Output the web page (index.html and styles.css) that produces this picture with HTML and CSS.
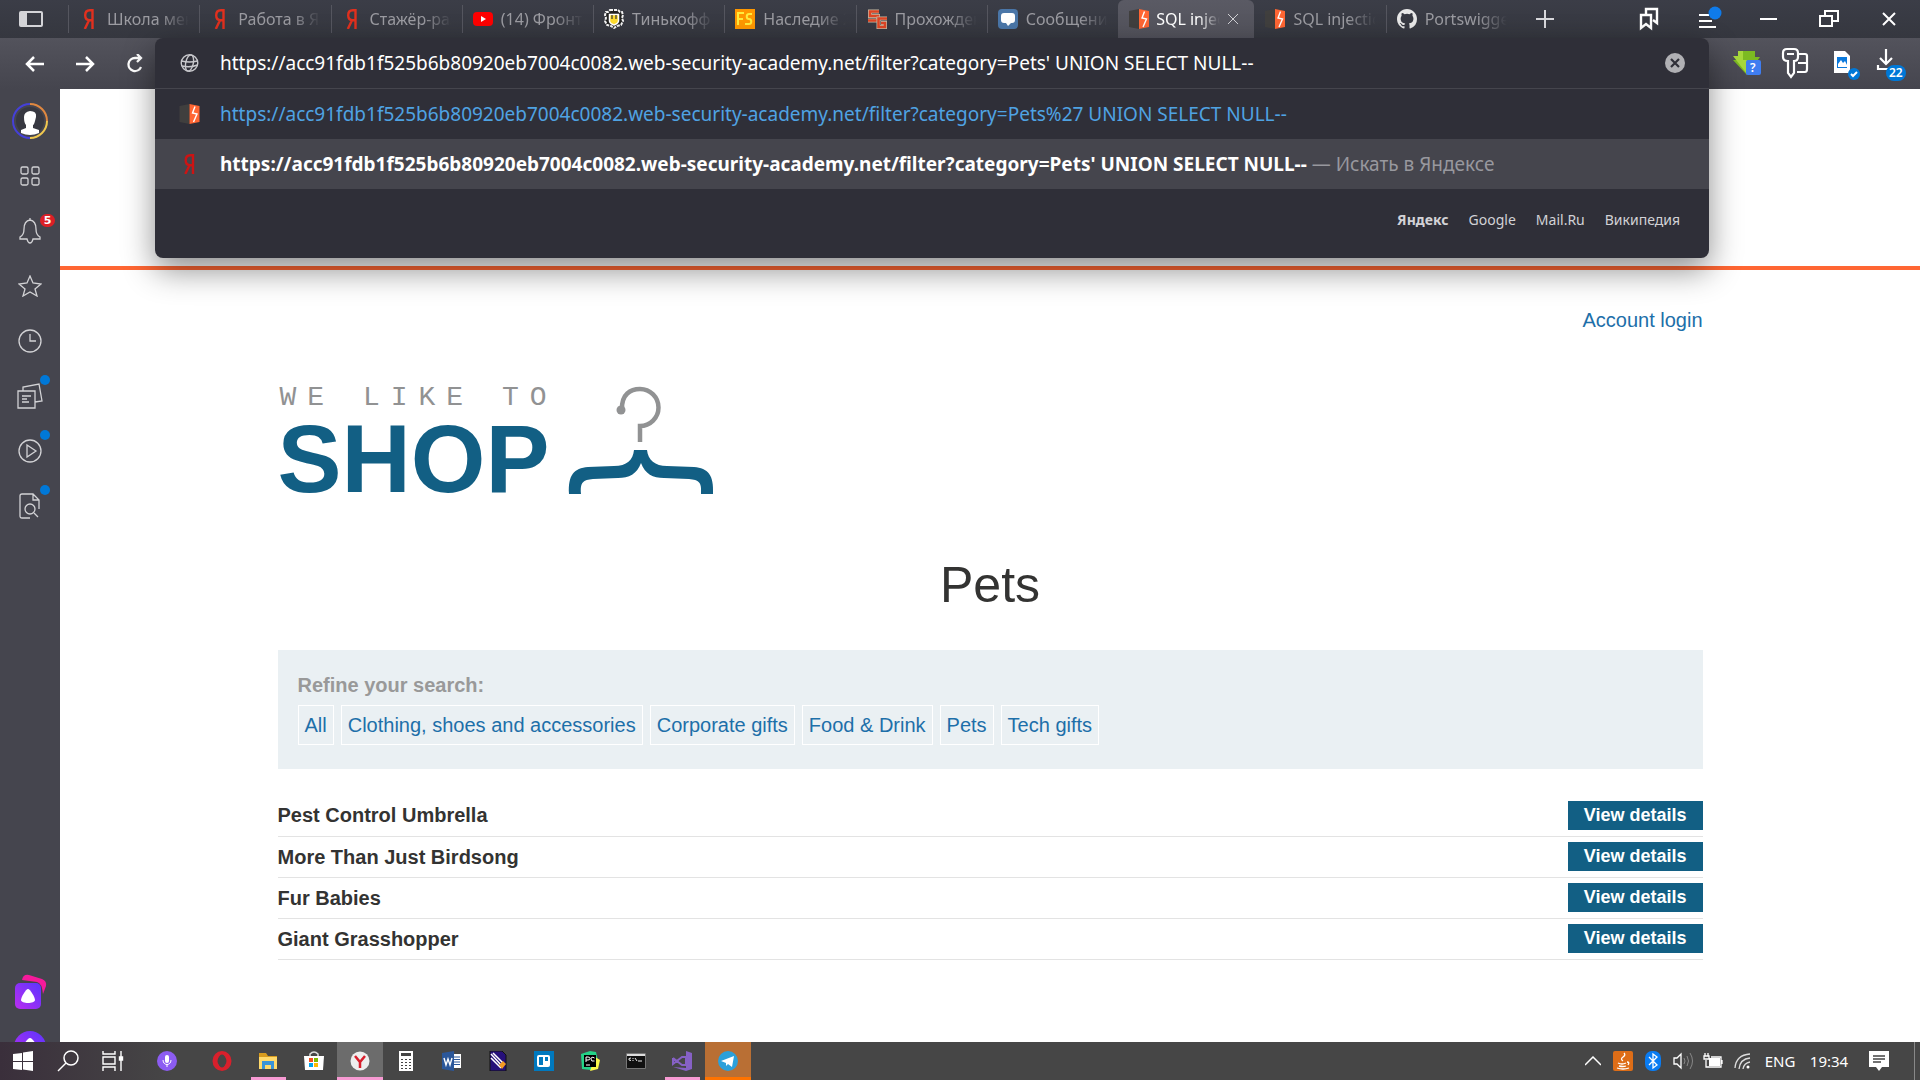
FILE: index.html
```html
<!DOCTYPE html>
<html lang="ru">
<head>
<meta charset="utf-8">
<title>SQL injection</title>
<link rel="stylesheet" href="styles.css">
</head>
<body>
<svg class="defs" aria-hidden="true">
  <symbol id="burp" viewBox="0 0 20 20"><path fill="#403f3e" d="M0 2 10 0v20L0 18z"/><path fill="#ff6633" d="M10 0l10 2v16l-10 2z"/><path d="M15.500 2.500 13 9l4.500 1-3.500 8" fill="none" stroke="#fff" stroke-width="1.400"/></symbol>
  <symbol id="ya" viewBox="0 0 20 20"><path d="M13.500 20V1.200h-2.700C7.800 1.200 6.200 3 6.200 6.200c0 3 1.600 5 4.600 5h2.700M10 11.200 5.800 20" fill="none" stroke="currentColor" stroke-width="2.400"/></symbol>
</svg>

<header class="tabbar">
  <button class="panel-toggle" aria-label="Tab panel"><svg width="24" height="16"><rect x="1" y="1" width="22" height="14" rx="1" fill="none" stroke="#d4d4d8" stroke-width="2"/><path fill="#d4d4d8" d="M1 1h7v14H1z"/></svg></button>
  <nav class="tabs">
    <a class="tab" href="#"><svg class="fav red"><use href="#ya"/></svg><span>Школа мен</span></a>
    <a class="tab" href="#"><svg class="fav red"><use href="#ya"/></svg><span>Работа в Ян</span></a>
    <a class="tab" href="#"><svg class="fav red"><use href="#ya"/></svg><span>Стажёр-раз</span></a>
    <a class="tab" href="#"><svg class="fav" viewBox="0 0 20 20"><rect y="3" width="20" height="14" rx="4" fill="#f00"/><path fill="#fff" d="M8 7l5 3-5 3z"/></svg><span>(14) Фронт</span></a>
    <a class="tab" href="#"><svg class="fav" viewBox="0 0 20 20"><path fill="#222" stroke="#f2f2f2" stroke-width="2" stroke-dasharray="3 1" d="M6 1h8l2 2h2l1 3-1 3 1 3-2 4-4 1-3 2-3-2-4-1-2-4 1-3-1-3 1-3h2z"/><path fill="#ffdd2d" stroke="#fff" stroke-width="1.500" d="M5.500 5.500h9V12c0 2-2 3-4.500 4-2.500-1-4.500-2-4.500-4z"/><path stroke="#333" stroke-width="1.200" d="M8 6v4M12 6v4"/></svg><span>Тинькофф</span></a>
    <a class="tab" href="#"><svg class="fav" viewBox="0 0 20 20"><path fill="#ff9800" d="M0 0h20v20H0z"/><path fill="none" stroke="#ffec3d" stroke-width="2" d="M3 16V4h6M3 10h5M17 5h-3c-3 0-3 5 0 5s3 5 0 5h-4"/></svg><span>Наследие 2</span></a>
    <a class="tab" href="#"><svg class="fav" viewBox="0 0 20 20"><path fill="none" stroke="#c5b9a4" stroke-width="4" d="M12 2.500H3V7h8v4.500H1"/><path fill="none" stroke="#dd4525" stroke-width="2.500" d="M12 2.500H3V7h8v4.500H1"/><path fill="none" stroke="#c5b9a4" stroke-width="4" d="M20 9.500h-8.500V18H18v-4h-4"/><path fill="none" stroke="#dd4525" stroke-width="2.500" d="M20 9.500h-8.500V18H18v-4h-4"/></svg><span>Прохожден</span></a>
    <a class="tab" href="#"><svg class="fav" viewBox="0 0 20 20"><rect width="20" height="20" rx="4" fill="#4a76a8"/><path fill="#fff" d="M6 4h8q3 0 3 3v4q0 3-3 3h-1l-3 3-2-3H6q-3 0-3-3V7q0-3 3-3"/></svg><span>Сообщени</span></a>
    <a class="tab active" href="#"><svg class="fav"><use href="#burp"/></svg><span>SQL injec</span><svg class="tab-close" width="12" height="12"><path d="M1 1l10 10M11 1 1 11" stroke="#d0d0d4"/></svg></a>
    <a class="tab" href="#"><svg class="fav"><use href="#burp"/></svg><span>SQL injectic</span></a>
    <a class="tab" href="#"><svg class="fav" viewBox="0 0 16 16"><path fill="#e8e8e8" d="M8 0C3.580 0 0 3.580 0 8c0 3.540 2.290 6.530 5.470 7.590.4.070.55-.17.55-.38v-1.490c-2.010.37-2.530-.49-2.690-.94-.09-.23-.48-.94-.82-1.130-.28-.15-.68-.52-.01-.53.63-.01 1.080.58 1.230.82.72 1.210 1.870.87 2.330.66.07-.52.28-.87.51-1.070-1.780-.2-3.640-.89-3.640-3.950 0-.87.31-1.590.82-2.150-.08-.2-.36-1.020.08-2.120 0 0 .67-.21 2.200.82a7.400 7.400 0 0 1 4 0c1.530-1.040 2.200-.82 2.200-.82.44 1.100.16 1.920.08 2.120.51.56.82 1.270.82 2.150 0 3.070-1.870 3.750-3.650 3.950.29.25.54.73.54 1.480v2.200c0 .21.15.46.55.38A8 8 0 0 0 16 8c0-4.420-3.580-8-8-8"/></svg><span>Portswigge</span></a>
  </nav>
  <button class="new-tab" aria-label="New tab"><svg width="18" height="18"><path d="M9 0v18M0 9h18" stroke="#d8d8dc" stroke-width="2"/></svg></button>
  <div class="window-buttons">
    <button aria-label="Bookmarks"><svg width="20" height="24"><path fill="none" stroke="#fff" stroke-width="2.400" d="M2 8h10v13l-5-4-5 4z"/><path d="M7 7V2h11v14l-4-3" fill="none" stroke="#fff" stroke-width="2.400"/></svg></button>
    <button aria-label="Menu"><svg width="26" height="26"><path d="M3 9h10M3 15h13M3 21h17" stroke="#fff" stroke-width="2"/><circle cx="19" cy="7" r="6.500" fill="#0f7bea"/></svg></button>
    <button aria-label="Minimize"><svg width="18" height="18"><path d="M0 9h17" stroke="#fff" stroke-width="2"/></svg></button>
    <button aria-label="Restore"><svg width="20" height="18"><path d="M1 6h12v10H1zM6 6V1h13v10h-6" fill="none" stroke="#fff" stroke-width="2"/></svg></button>
    <button aria-label="Close"><svg width="14" height="14"><path d="M1 1l12 12M13 1 1 13" stroke="#fff" stroke-width="2"/></svg></button>
  </div>
</header>

<div class="toolbar">
  <div class="nav-buttons">
    <button aria-label="Back"><svg width="20" height="18"><path d="M19 9H2M9 2 2 9l7 7" fill="none" stroke="#fff" stroke-width="2.500"/></svg></button>
    <button aria-label="Forward"><svg width="20" height="18"><path d="M1 9h17M11 2l7 7-7 7" fill="none" stroke="#fff" stroke-width="2.500"/></svg></button>
    <button aria-label="Reload"><svg width="18" height="20"><path d="M15 13a6.500 6.500 0 1 1-6-9h6M11 0l4 4-4 4" fill="none" stroke="#fff" stroke-width="2.300"/></svg></button>
  </div>
  <div class="omnibox">
    <div class="popup">
      <div class="address">
        <svg class="row-icon" viewBox="0 0 20 20"><g fill="none" stroke="#c8c8cc" stroke-width="1.400"><circle cx="10" cy="10" r="8.300"/><ellipse cx="10" cy="10" rx="3.800" ry="8.300" transform="rotate(12 10 10)"/><path d="M2 8q8 2 16 0M2.500 13q8 2 15.500-1"/></g></svg>
        <input type="text" aria-label="Address" value="https://acc91fdb1f525b6b80920eb7004c0082.web-security-academy.net/filter?category=Pets' UNION SELECT NULL--">
        <button aria-label="Clear"><svg width="20" height="20"><circle cx="10" cy="10" r="10" fill="#b0b0b4"/><path d="M6 6l8 8M14 6l-8 8" stroke="#2f2f38" stroke-width="2.200"/></svg></button>
      </div>
      <a class="suggest blue" href="#"><svg class="row-icon"><use href="#burp"/></svg><span>https://acc91fdb1f525b6b80920eb7004c0082.web-security-academy.net/filter?category=Pets%27 UNION SELECT NULL--</span></a>
      <a class="suggest selected" href="#"><svg class="row-icon dark-red"><use href="#ya"/></svg><span><b>https://acc91fdb1f525b6b80920eb7004c0082.web-security-academy.net/filter?category=Pets' UNION SELECT NULL--</b><small> — Искать в Яндексе</small></span></a>
      <div class="engines"><a href="#"><b>Яндекс</b></a><a href="#">Google</a><a href="#">Mail.Ru</a><a href="#">Википедия</a></div>
    </div>
  </div>
  <div class="extensions">
    <button aria-label="Savefrom"><svg width="30" height="28"><path fill="#7cba22" d="M7 1h16v6h5L15 25 1 10h6z"/><path fill="#a6d83c" d="M1 6h5V1h5v9h4v14z"/><rect x="14" y="10" width="15" height="15" rx="2" fill="#3f7df0"/><text x="18" y="22" class="badge-text">?</text></svg></button>
    <button aria-label="Passwords"><svg width="28" height="34"><path d="M6 2h7q4 0 4 4v4q0 4-4 4v12l-3 4-3-4V14q-5 0-5-4V6q0-4 4-4zM6 7h7M18 7h6q2 0 2 2v13q0 3-2 3h-8M17 16h9" fill="none" stroke="#fff" stroke-width="2.200"/></svg></button>
    <button class="shot" aria-label="Screenshot"><svg width="30" height="32"><path fill="#fff" d="M2 3h11l5 5v17H2z"/><path fill="#0b79dc" d="M5 9h10v11H5z"/><path fill="#fff" d="m6 16 3-4 2 3 2-2 2 4v2H6z"/><circle cx="22" cy="26" r="6" fill="#0078d7"/><path d="m19 26 2 2 4-4" fill="none" stroke="#fff" stroke-width="2"/></svg></button>
    <button aria-label="Downloads"><svg width="32" height="36"><path d="M11 3v15M5 12l6 6 6-6M3 19v4h11" fill="none" stroke="#fff" stroke-width="2.200"/><rect x="11" y="19" width="20" height="16" rx="8" fill="#0078d7"/><text x="14" y="31" class="badge-text">22</text></svg></button>
  </div>
</div>

<div class="main">
  <aside class="sidebar">
    <button aria-label="Profile"><svg width="36" height="36" fill="none" stroke-width="2"><circle cx="18" cy="18" r="14" fill="#373841"/><path stroke="#4540d8" d="M18 35a17 17 0 0 1 0-34"/><path stroke="#e08840" d="M18 1a17 17 0 0 1 17 17"/><path stroke="#f0c850" d="M35 18a17 17 0 0 1-17 17"/><path fill="#fff" d="M12 14q0-5 6-6 7 0 6 6l-1 4q-1 4-2 4v3l6 2v3q-9 4-18 0v-3l5-2v-3q-2-2-2-8"/></svg></button>
    <button aria-label="Apps"><svg width="22" height="22" class="line"><rect x="2" y="2" width="7" height="7" rx="1.500"/><rect x="13" y="2" width="7" height="7" rx="1.500"/><rect x="2" y="13" width="7" height="7" rx="1.500"/><rect x="13" y="13" width="7" height="7" rx="1.500"/></svg></button>
    <button aria-label="Notifications"><svg width="24" height="28" class="line"><path d="M12 1v2q6 1 6 9 0 6 4 8v2h-7q-1 4-3 4t-3-4H2v-2q4-2 4-8 0-8 6-9"/></svg><i class="count">5</i></button>
    <button aria-label="Favourites"><svg width="24" height="22" class="line"><path d="m12 1 3 7 8 1-6 5 2 7-7-4-7 4 2-7-6-5 8-1z"/></svg></button>
    <button aria-label="History"><svg width="24" height="24" class="line"><circle cx="12" cy="12" r="11"/><path d="M12 5v7h6"/></svg></button>
    <button aria-label="Collections"><svg width="26" height="26" class="line"><path d="M1 8h17v17H1zM5 13h9M5 16h5M5 19h7M6 8V4l16-3 3 17-7 1"/></svg><i class="dot"></i></button>
    <button aria-label="Video"><svg width="24" height="24" class="line"><circle cx="12" cy="12" r="11"/><path d="m9 6 9 6-9 6z"/></svg><i class="dot"></i></button>
    <button aria-label="Find"><svg width="22" height="26" class="line"><path d="M11 25H3q-2 0-2-2V3q0-2 2-2h11l6 6v9M14 1v6h6M15 20l4 4"/><circle cx="11" cy="16" r="5"/></svg><i class="dot"></i></button>
    <div class="alice">
      <button aria-label="Alice"><svg width="34" height="36"><defs><linearGradient id="al" x1="1" y1="0" x2="0" y2="1"><stop stop-color="#5a35ff"/><stop offset="1" stop-color="#bb2df0"/></linearGradient></defs><path fill="#f51a9b" d="M9 6q1-6 7-5l13 4q5 2 4 7l-3 8q-1-11-6-12z"/><rect x="2" y="9" width="26" height="26" rx="5" fill="url(#al)"/><path fill="#fff" d="M15 15c2 0 7 8 7 11 0 4-14 4-14 0 0-3 5-11 7-11"/></svg></button>
      <button aria-label="Assistant"><svg width="34" height="34"><circle cx="17" cy="17" r="16" fill="url(#al)"/><path fill="#fff" d="M17 8c3 0 8 9 8 12 0 5-16 5-16 0 0-3 5-12 8-12"/></svg></button>
    </div>
  </aside>

  <main class="page">
    <div class="banner"></div>
    <div class="container">
      <div class="account"><a href="#">Account login</a></div>
      <div class="logo">
        <div class="logo-words"><span class="logo-small">WE LIKE TO</span><span class="logo-big">SHOP</span></div>
        <svg width="146" height="110" viewBox="0 0 146 110"><path d="M54 24C53 8 63 3 72 3a18 18 0 0 1 0 37v16" fill="none" stroke="#919293" stroke-width="4.500"/><circle cx="53" cy="24" r="4.500" fill="#919293"/><path fill="#125f84" d="M66 64h13c1 10 8 16 20 16l27 1c14 1 20 8 19 27h-12c1-12-2-14-12-15l-25-1c-11 0-19-4-23-15-4 11-12 15-23 15l-25 1c-10 1-13 3-12 15H1C0 89 6 82 20 81l26-1c13 0 19-6 20-16"/></svg>
      </div>
      <h1>Pets</h1>
      <section class="filters">
        <h2>Refine your search:</h2>
        <div class="tags"><a href="#">All</a><a href="#">Clothing, shoes and accessories</a><a href="#">Corporate gifts</a><a href="#">Food &amp; Drink</a><a href="#">Pets</a><a href="#">Tech gifts</a></div>
      </section>
      <table class="products">
        <tr><th scope="row">Pest Control Umbrella</th><td><a href="#">View details</a></td></tr>
        <tr><th scope="row">More Than Just Birdsong</th><td><a href="#">View details</a></td></tr>
        <tr><th scope="row">Fur Babies</th><td><a href="#">View details</a></td></tr>
        <tr><th scope="row">Giant Grasshopper</th><td><a href="#">View details</a></td></tr>
      </table>
    </div>
  </main>
</div>

<footer class="taskbar">
  <div class="system">
    <button aria-label="Start"><svg width="20" height="20"><path fill="#fff" d="M0 3l9-1v8H0zM10 1.500 20 0v10H10zM0 11h9v8l-9-1zM10 11h10v9l-10-1.500z"/></svg></button>
    <button aria-label="Search"><svg width="22" height="22" fill="none" stroke="#fff" stroke-width="1.500"><circle cx="14" cy="8" r="7"/><path d="m9 13-8 8"/></svg></button>
    <button aria-label="Task view"><svg width="22" height="20" fill="none" stroke="#fff" stroke-width="1.400"><path d="M1 0v3h12V0M1 20v-4h12v4M1 6h12v7H1zM19 0v20"/><path fill="#fff" d="M17.500 6h3v3h-3z"/></svg></button>
  </div>
  <div class="apps">
    <button class="voice" aria-label="Voice"><svg width="20" height="20"><circle cx="10" cy="10" r="10" fill="#8c5cf2"/><rect x="8" y="4" width="4" height="8" rx="2" fill="#fff"/><path d="M6 9c0 6 8 6 8 0M10 13v3" fill="none" stroke="#fff"/></svg></button>
    <button aria-label="Opera"><svg width="20" height="20"><ellipse cx="10" cy="10" rx="7" ry="7.500" fill="none" stroke="#d8202c" stroke-width="5"/><ellipse cx="10" cy="10" rx="4" ry="6.500" fill="#454545"/></svg></button>
    <button class="open" aria-label="Explorer"><svg width="20" height="18"><path fill="#d79b1e" d="M1 1h7l2 3h9v5H1z"/><path fill="#ffd96b" d="M1 5h18v12H1z"/><path fill="#3a94d8" d="M4 9h12v8h-3v-4H7v4H4z"/></svg></button>
    <button aria-label="Store"><svg width="20" height="20"><path d="M6 5V3q4-4 8 0v2" fill="none" stroke="#ddd" stroke-width="1.500"/><path fill="#fff" d="M0 5h20l-1 14H1z"/><path fill="#f25022" d="M5 7h4v4H5z"/><path fill="#7fba00" d="M10 7h4v4h-4z"/><path fill="#00a4ef" d="M5 12h4v4H5z"/><path fill="#ffb900" d="M10 12h4v4h-4z"/></svg></button>
    <button class="current" aria-label="Yandex"><svg width="20" height="20"><circle cx="10" cy="10" r="9.500" fill="#eee"/><path d="M5 5l5 6 5-6M10 11v6" fill="none" stroke="#d81e2c" stroke-width="2.500"/></svg></button>
    <button aria-label="Calculator"><svg width="14" height="20"><path fill="#fff" d="M0 0h14v20H0z"/><path fill="#444" d="M2 2h10v3H2z"/><path d="M3 8v10M7 8v10M11 8v10" stroke="#444" stroke-width="2" stroke-dasharray="1 2"/></svg></button>
    <button aria-label="Word"><svg width="20" height="20"><path fill="#fff" d="M10 3h9v14h-9z"/><path stroke="#2b579a" d="M12 6h6M12 8.500h6M12 11h6M12 13.500h6"/><path fill="#2b579a" d="m0 2 12-2v20L0 18z"/><path d="m2 7 2 7 2-6 2 6 2-7" fill="none" stroke="#fff" stroke-width="1.400"/></svg></button>
    <button aria-label="Editor"><svg width="18" height="20"><path fill="#26107a" stroke="#111" d="M1 0h12l4 4v16H1z"/><path d="m2 3 11 12M4 2l11 11M2 7l10 10" stroke="#fff" stroke-width="1.500"/><path fill="#f59a23" d="m10 14 4-4 3 3-4 5z"/></svg></button>
    <button aria-label="Trello"><svg width="20" height="20"><path fill="#0079bf" d="M0 0h20v20H0z"/><rect x="3" y="4" width="13" height="12" rx="2" fill="#fff"/><path fill="#0079bf" d="M5 6h4v8H5zM11 6h3v4h-3z"/></svg></button>
    <button aria-label="PyCharm"><svg width="20" height="20"><path fill="#24d488" d="m1 3 9-3 6 1 2 9-7 9-9-1z"/><path fill="#fcf84a" d="m15 6 5 3-2 9-8 2z"/><path fill="#000" d="M4 4h12v12H4z"/><path d="M6 11V6h2q2 0 2 1.500T8 9H6M14.500 7Q11 5 11 8t3.500 2M6 14h4" fill="none" stroke="#fff"/></svg></button>
    <button aria-label="Console"><svg width="20" height="16"><path fill="#111" stroke="#777" d="M.5.5h19v15H.5z"/><path fill="#ddd" d="M1 1h18v2H1z"/><path d="M5 5q-3 0-2 2l2 .5M7 5v1M7 7v1M9 5l2 3M12 8h4" fill="none" stroke="#eee"/></svg></button>
    <button class="open" aria-label="Visual Studio"><svg width="20" height="20"><path d="M1 7v6l9-7 4 0v8h-4L1 7" fill="none" stroke="#8661c5" stroke-width="2"/><path fill="#8661c5" d="m14 0 6 2v16l-6 2-13-4 13 1z"/></svg></button>
    <button class="telegram" aria-label="Telegram"><svg width="20" height="20"><circle cx="10" cy="10" r="10" fill="#2ba0da"/><path fill="#fff" d="m3 10 13-5-2 11-4-3-2 2v-3z"/></svg></button>
  </div>
  <div class="tray">
    <button aria-label="Hidden icons"><svg width="16" height="10"><path d="m0 9 8-8 8 8" fill="none" stroke="#fff" stroke-width="1.500"/></svg></button>
    <button aria-label="Java"><svg width="20" height="20"><rect width="20" height="20" rx="2" fill="#dd6d17"/><path d="M11 2q2 2-1 4t0 4M5 12q4 2 8 0M6 15q4 1 7 0M4 17q6 2 12 0M14 11q3 0 1 3" fill="none" stroke="#fff" stroke-width="1.300"/></svg></button>
    <button aria-label="Bluetooth"><svg width="16" height="20"><rect width="16" height="20" rx="7" fill="#0a7cf2"/><path d="m4 6 8 8-4 3V3l4 3-8 8" fill="none" stroke="#fff" stroke-width="1.300"/></svg></button>
    <button aria-label="Volume"><svg width="20" height="18"><path d="M1 6h3l4-4v14l-4-4H1z" fill="none" stroke="#fff" stroke-width="1.300"/><path d="M11 6q2 3 0 6M14 4q3 5 0 10M17 1q5 8 0 16" fill="none" stroke="#888"/></svg></button>
    <button aria-label="Battery"><svg width="20" height="16"><path fill="#fff" d="M6 5h11v8H6z"/><path d="M3 7v7h15V4H8M19 7v4M1 3h5v3H1zM2 0v3M5 0v3" fill="none" stroke="#fff" stroke-width="1.300"/></svg></button>
    <button aria-label="Network"><svg width="18" height="18" fill="none" stroke="#ddd" stroke-width="1.300"><path d="M1 16Q2 3 16 2M5 17Q6 7 16 6M9 17q1-6 7-7"/><circle cx="14" cy="15" r="1.500" fill="#fff" stroke="none"/></svg></button>
    <button class="lang">ENG</button>
    <span class="clock">19:34</span>
    <button class="messages" aria-label="Notifications"><svg width="20" height="20"><path fill="#fff" d="M0 0h20v16h-7l-3 4-3-4H0z"/><path d="M4 5h12M4 8h12M4 11h8" stroke="#444" stroke-width="1.300"/></svg></button>
  </div>
</footer>
</body>
</html>
```
FILE: styles.css
```css
* { box-sizing: border-box; }
body {
  margin: 0;
  height: 100vh;
  display: grid;
  grid-template-rows: 38px 51px 1fr 38px;
  overflow: hidden;
  font-family: "Noto Sans", "Open Sans", sans-serif;
  background: #fff;
}
button {
  display: flex;
  flex: none;
  align-items: center;
  justify-content: center;
  padding: 0;
  border: 0;
  background: none;
  font: inherit;
  color: inherit;
}
a { text-decoration: none; color: inherit; }
svg { display: block; flex: none; }
.defs { position: absolute; width: 0; height: 0; }

.tabbar {
  display: flex;
  background: linear-gradient(#3b3d47, #35373f);
}
.panel-toggle { width: 68px; padding-right: 6px; }
.tabs { display: flex; flex: 0 1 1449px; min-width: 0; }
.tab {
  display: flex;
  align-items: center;
  flex: 1 1 0;
  min-width: 0;
  gap: 8px;
  padding: 0 10px 0 11px;
  color: #9b9ba1;
  font-size: 16px;
  background: linear-gradient(#55565f, #55565f) left center / 1px 28px no-repeat;
}
.tab span {
  flex: 1;
  overflow: hidden;
  white-space: nowrap;
  mask-image: linear-gradient(to right, #000 65%, transparent);
}
.tab.active {
  gap: 7px;
  padding-right: 15px;
  color: #fff;
  background: linear-gradient(#5a5a64, #52525b);
  border-radius: 6px 6px 0 0;
}
.tab.active + .tab { background: none; }
.fav { width: 20px; height: 20px; }
.red { color: #e1301e; }
.dark-red { color: #cc1414; }
.new-tab { width: 56px; }
.window-buttons { display: flex; margin-left: auto; padding-right: 1px; }
.window-buttons button { width: 60px; }

.toolbar {
  display: flex;
  background: linear-gradient(#53535c, #45454e);
}
.nav-buttons { display: flex; flex: 0 0 155px; min-width: 0; padding-left: 10px; }
.nav-buttons button { width: 50px; }
.omnibox { flex: 1; position: relative; z-index: 2; }
.popup {
  position: absolute;
  top: 0;
  left: 0;
  right: 0;
  background: #2f2f38;
  border-radius: 8px;
  box-shadow: 0 12px 32px rgba(0, 0, 0, .45);
  overflow: hidden;
  color: #fff;
  font-size: 19px;
}
.address, .suggest {
  display: flex;
  align-items: center;
  gap: 20px;
  height: 50px;
  padding: 0 24px;
}
.address { height: 51px; border-bottom: 1px solid #45454d; }
.address input {
  flex: 1;
  min-width: 0;
  padding: 0;
  border: 0;
  outline: 0;
  background: none;
  color: #fff;
  font: inherit;
}
.row-icon { width: 21px; height: 20px; }
.suggest span { white-space: nowrap; overflow: hidden; }
.suggest small { font-size: inherit; color: #98989e; }
.blue { color: #4fa3e3; }
.selected { background: #45454d; }
.engines {
  display: flex;
  justify-content: flex-end;
  gap: 20px;
  height: 69px;
  padding: 19px 29px 0 0;
  font-size: 14px;
  line-height: 24px;
  color: #d2d2d6;
}
.extensions { display: flex; flex: 0 0 211px; padding-left: 14px; }
.extensions button { width: 48px; }
.extensions .shot { padding-left: 8px; }
.badge-text { font-size: 12px; font-weight: 600; fill: #fff; }

.main { display: flex; min-height: 0; }
.sidebar {
  display: flex;
  flex-direction: column;
  flex: 0 0 60px;
  padding-top: 4px;
  background: #45454e;
  overflow: hidden;
}
.sidebar button { position: relative; width: 60px; height: 55px; }
.line { fill: none; stroke: #d2d2d5; stroke-width: 1.300; }
.dot {
  position: absolute;
  top: 7px;
  right: 10px;
  width: 10px;
  height: 10px;
  border-radius: 50%;
  background: #0078d7;
}
.count {
  position: absolute;
  top: 11px;
  right: 5px;
  width: 15px;
  height: 13px;
  border-radius: 7px;
  background: #dc1f26;
  color: #fff;
  font: bold 11px/13px "DejaVu Sans", sans-serif;
  text-align: center;
}
.alice { margin: auto 0 -32px; }

.page {
  flex: 1;
  min-width: 0;
  overflow: hidden;
  color: #333332;
  font: 20px/24px "Liberation Sans", Arial, sans-serif;
}
.page a { color: #1d6fa9; }
.banner { height: 181px; border-bottom: 4px solid #ff6633; }
.container { max-width: 1425px; margin: 0 auto; }
.account { padding: 38px 0 54px; text-align: right; }
.logo { display: flex; gap: 22px; height: 110px; }
.logo-words { display: flex; flex-direction: column; width: 268px; white-space: nowrap; }
.logo-small {
  padding-left: 2px;
  font: 28px/24px "Liberation Mono", monospace;
  letter-spacing: 11px;
  color: #919293;
}
.logo-big { font-weight: bold; font-size: 96px; line-height: 98px; color: #125f84; }
h1 { margin: 59px 0 35px; font-size: 50px; line-height: 60px; font-weight: normal; text-align: center; }
.filters { height: 119px; padding: 23px 20px 0; background: #eaf0f3; }
.filters h2 { margin: 0 0 8px; font-size: 20px; line-height: 24px; color: #999; }
.tags { display: flex; gap: 7px; }
.page .tags a { padding: 0 6px; border: 1px solid #fff; line-height: 38px; }
.products { width: 100%; margin-top: 26px; border-collapse: collapse; }
.products th, .products td { height: 41px; padding: 0; border-bottom: 1px solid #e3e3e3; }
.products th { text-align: left; }
.products td { text-align: right; }
.page .products a {
  display: inline-block;
  padding: 0 16px;
  background: #125f84;
  color: #fff;
  font-size: 18px;
  font-weight: bold;
  line-height: 29px;
  vertical-align: middle;
}

.taskbar {
  display: flex;
  position: relative;
  z-index: 3;
  color: #fff;
  background: linear-gradient(to right, #3a2f3b, #464646 9%);
}
.system, .apps, .tray { display: flex; }
.system button { width: 45px; }
.apps button { width: 46px; }
.apps .voice { margin: 0 9px; }
.apps .open { background: linear-gradient(#f79ad3, #f79ad3) center bottom / 35px 3px no-repeat; }
.apps .current { background: linear-gradient(#6c6c6c 35px, #f79ad3 35px); }
.apps .telegram { background: linear-gradient(#b96f34 35px, #ff7300 35px); }
.tray { margin-left: auto; margin-right: 5px; border-right: 1px solid #888; font-size: 15px; line-height: 38px; }
.tray button { width: 30px; }
.tray .lang { width: 44px; }
.clock { width: 54px; text-align: center; }
.tray .messages { width: 46px; margin-right: 12px; }
```
